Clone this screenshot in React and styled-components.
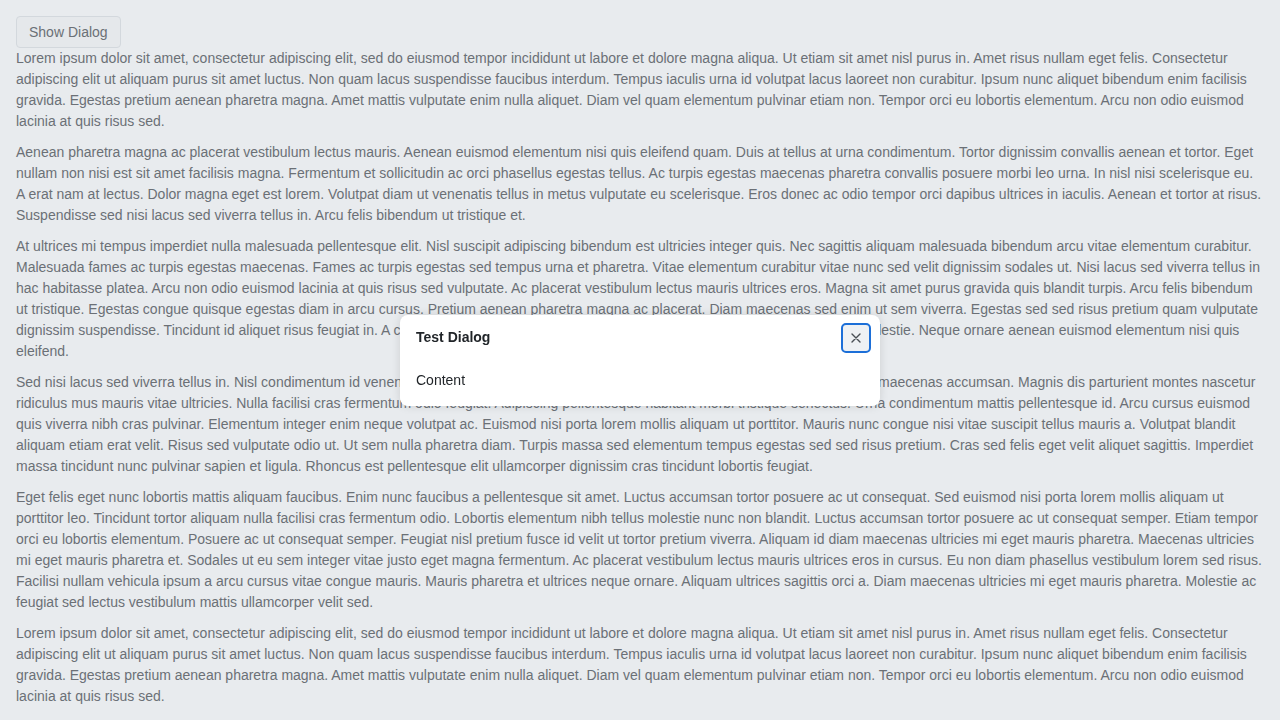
import styled, { createGlobalStyle } from "styled-components"

const textos = [
  "Lorem ipsum dolor sit amet, consectetur adipiscing elit, sed do eiusmod tempor incididunt ut labore et dolore magna aliqua. Ut etiam sit amet nisl purus in. Amet risus nullam eget felis. Consectetur adipiscing elit ut aliquam purus sit amet luctus. Non quam lacus suspendisse faucibus interdum. Tempus iaculis urna id volutpat lacus laoreet non curabitur. Ipsum nunc aliquet bibendum enim facilisis gravida. Egestas pretium aenean pharetra magna. Amet mattis vulputate enim nulla aliquet. Diam vel quam elementum pulvinar etiam non. Tempor orci eu lobortis elementum. Arcu non odio euismod lacinia at quis risus sed.",
  "Aenean pharetra magna ac placerat vestibulum lectus mauris. Aenean euismod elementum nisi quis eleifend quam. Duis at tellus at urna condimentum. Tortor dignissim convallis aenean et tortor. Eget nullam non nisi est sit amet facilisis magna. Fermentum et sollicitudin ac orci phasellus egestas tellus. Ac turpis egestas maecenas pharetra convallis posuere morbi leo urna. In nisl nisi scelerisque eu. A erat nam at lectus. Dolor magna eget est lorem. Volutpat diam ut venenatis tellus in metus vulputate eu scelerisque. Eros donec ac odio tempor orci dapibus ultrices in iaculis. Aenean et tortor at risus. Suspendisse sed nisi lacus sed viverra tellus in. Arcu felis bibendum ut tristique et.",
  "At ultrices mi tempus imperdiet nulla malesuada pellentesque elit. Nisl suscipit adipiscing bibendum est ultricies integer quis. Nec sagittis aliquam malesuada bibendum arcu vitae elementum curabitur. Malesuada fames ac turpis egestas maecenas. Fames ac turpis egestas sed tempus urna et pharetra. Vitae elementum curabitur vitae nunc sed velit dignissim sodales ut. Nisi lacus sed viverra tellus in hac habitasse platea. Arcu non odio euismod lacinia at quis risus sed vulputate. Ac placerat vestibulum lectus mauris ultrices eros. Magna sit amet purus gravida quis blandit turpis. Arcu felis bibendum ut tristique. Egestas congue quisque egestas diam in arcu cursus. Pretium aenean pharetra magna ac placerat. Diam maecenas sed enim ut sem viverra. Egestas sed sed risus pretium quam vulputate dignissim suspendisse. Tincidunt id aliquet risus feugiat in. A cras semper auctor neque vitae tempus quam. Sed vulputate mi sit amet a molestie. Neque ornare aenean euismod elementum nisi quis eleifend.",
  "Sed nisi lacus sed viverra tellus in. Nisl condimentum id venenatis a condimentum vitae sapien pellentesque habitant nibh tristique. Viverra maecenas accumsan. Magnis dis parturient montes nascetur ridiculus mus mauris vitae ultricies. Nulla facilisi cras fermentum odio feugiat. Adipiscing pellentesque habitant morbi tristique senectus. Urna condimentum mattis pellentesque id. Arcu cursus euismod quis viverra nibh cras pulvinar. Elementum integer enim neque volutpat ac. Euismod nisi porta lorem mollis aliquam ut porttitor. Mauris nunc congue nisi vitae suscipit tellus mauris a. Volutpat blandit aliquam etiam erat velit. Risus sed vulputate odio ut. Ut sem nulla pharetra diam. Turpis massa sed elementum tempus egestas sed sed risus pretium. Cras sed felis eget velit aliquet sagittis. Imperdiet massa tincidunt nunc pulvinar sapien et ligula. Rhoncus est pellentesque elit ullamcorper dignissim cras tincidunt lobortis feugiat.",
  "Eget felis eget nunc lobortis mattis aliquam faucibus. Enim nunc faucibus a pellentesque sit amet. Luctus accumsan tortor posuere ac ut consequat. Sed euismod nisi porta lorem mollis aliquam ut porttitor leo. Tincidunt tortor aliquam nulla facilisi cras fermentum odio. Lobortis elementum nibh tellus molestie nunc non blandit. Luctus accumsan tortor posuere ac ut consequat semper. Etiam tempor orci eu lobortis elementum. Posuere ac ut consequat semper. Feugiat nisl pretium fusce id velit ut tortor pretium viverra. Aliquam id diam maecenas ultricies mi eget mauris pharetra. Maecenas ultricies mi eget mauris pharetra et. Sodales ut eu sem integer vitae justo eget magna fermentum. Ac placerat vestibulum lectus mauris ultrices eros in cursus. Eu non diam phasellus vestibulum lorem sed risus. Facilisi nullam vehicula ipsum a arcu cursus vitae congue mauris. Mauris pharetra et ultrices neque ornare. Aliquam ultrices sagittis orci a. Diam maecenas ultricies mi eget mauris pharetra. Molestie ac feugiat sed lectus vestibulum mattis ullamcorper velit sed.",
  "Lorem ipsum dolor sit amet, consectetur adipiscing elit, sed do eiusmod tempor incididunt ut labore et dolore magna aliqua. Ut etiam sit amet nisl purus in. Amet risus nullam eget felis. Consectetur adipiscing elit ut aliquam purus sit amet luctus. Non quam lacus suspendisse faucibus interdum. Tempus iaculis urna id volutpat lacus laoreet non curabitur. Ipsum nunc aliquet bibendum enim facilisis gravida. Egestas pretium aenean pharetra magna. Amet mattis vulputate enim nulla aliquet. Diam vel quam elementum pulvinar etiam non. Tempor orci eu lobortis elementum. Arcu non odio euismod lacinia at quis risus sed.",
]

const App = () => {
  return (
    <>
      <Estilos />
      <Pagina>
        <BotonMostrar>Show Dialog</BotonMostrar>
        { textos.map( ( texto, i ) => (
          <Parrafo key={ i }>{ texto }</Parrafo>
        ))}
      </Pagina>
      <Fondo>
        <Dialogo role="dialog">
          <Cabecera>
            <Titulo>Test Dialog</Titulo>
            <BotonCerrar aria-label="Close">
              <svg width="10" height="10" viewBox="0 0 10 10">
                <path d="M1 1 L9 9 M9 1 L1 9" stroke="#4a4f55" strokeWidth="1.4" strokeLinecap="round" />
              </svg>
            </BotonCerrar>
          </Cabecera>
          <Cuerpo>Content</Cuerpo>
        </Dialogo>
      </Fondo>
    </>
  )
}

const Estilos = createGlobalStyle`
  * { box-sizing: border-box; }
  html, body {
    margin: 0;
    background: #e8ebee;
  }
  body {
    font-family: "Liberation Sans", Arial, sans-serif;
    font-size: 14px;
    line-height: 21px;
    color: #6b7076;
  }
`

const Pagina = styled.div`
  padding: 16px;
`

const BotonMostrar = styled.button`
  display: block;
  height: 32px;
  padding: 0 12px 1px;
  font-family: inherit;
  font-size: 14px;
  color: #6b7076;
  background: #e5e8eb;
  border: 1px solid #d3d8dd;
  border-radius: 4px;
  cursor: pointer;
`

const Parrafo = styled.p`
  margin: 0 0 10px;
`

const Fondo = styled.div`
  position: fixed;
  inset: 0;
  display: flex;
  align-items: center;
  justify-content: center;
`

const Dialogo = styled.div`
  width: 480px;
  background: #ffffff;
  border-radius: 8px;
  box-shadow: 0 0 10px rgba(0, 0, 0, 0.12);
  color: #212529;
`

const Cabecera = styled.div`
  display: flex;
  align-items: center;
  justify-content: space-between;
  padding: 8px 9px 8px 16px;
`

const Titulo = styled.h2`
  margin: 0;
  font-size: 14px;
  font-weight: bold;
  line-height: 21px;
`

const BotonCerrar = styled.button`
  display: flex;
  align-items: center;
  justify-content: center;
  width: 30px;
  height: 30px;
  padding: 0;
  background: #eef1f4;
  border: 2px solid #1c6fd8;
  border-radius: 5px;
  cursor: pointer;
`

const Cuerpo = styled.div`
  padding: 9px 16px 15px;
  line-height: 21px;
`

export default App
